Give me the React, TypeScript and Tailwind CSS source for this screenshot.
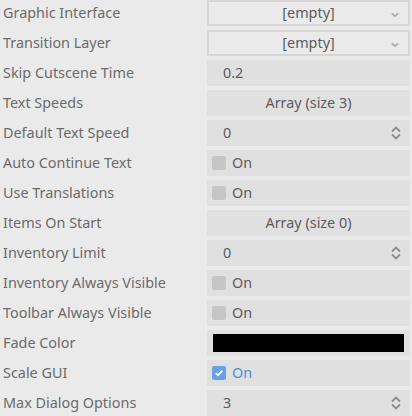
import type { ReactNode } from 'react';

type Field =
  | { kind: 'select'; value: string }
  | { kind: 'text'; value: string }
  | { kind: 'array'; size: number }
  | { kind: 'spin'; value: number }
  | { kind: 'check'; on: boolean }
  | { kind: 'color'; color: string };

const rows: { label: string; field: Field }[] = [
  { label: 'Graphic Interface', field: { kind: 'select', value: '[empty]' } },
  { label: 'Transition Layer', field: { kind: 'select', value: '[empty]' } },
  { label: 'Skip Cutscene Time', field: { kind: 'text', value: '0.2' } },
  { label: 'Text Speeds', field: { kind: 'array', size: 3 } },
  { label: 'Default Text Speed', field: { kind: 'spin', value: 0 } },
  { label: 'Auto Continue Text', field: { kind: 'check', on: false } },
  { label: 'Use Translations', field: { kind: 'check', on: false } },
  { label: 'Items On Start', field: { kind: 'array', size: 0 } },
  { label: 'Inventory Limit', field: { kind: 'spin', value: 0 } },
  { label: 'Inventory Always Visible', field: { kind: 'check', on: false } },
  { label: 'Toolbar Always Visible', field: { kind: 'check', on: false } },
  { label: 'Fade Color', field: { kind: 'color', color: '#000000' } },
  { label: 'Scale GUI', field: { kind: 'check', on: true } },
  { label: 'Max Dialog Options', field: { kind: 'spin', value: 3 } },
];

function Chevron() {
  return (
    <svg width="10" height="6" viewBox="0 0 10 6" className="absolute right-[8px] top-[10px]">
      <path d="M1.8 1.4 5 4.2 8.2 1.4" fill="none" stroke="#ababab" strokeWidth="1.7" />
    </svg>
  );
}

function Stepper() {
  return (
    <svg width="12" height="16" viewBox="0 0 12 16" className="absolute right-[8px] top-[5px]">
      <path d="M2 6.5 6 2.5 10 6.5M2 9.5 6 13.5 10 9.5" fill="none" stroke="#8c8c8c" strokeWidth="1.8" />
    </svg>
  );
}

function Value({ field }: { field: Field }) {
  const base = 'relative h-[26px] w-full text-[14.4px] text-[#5c5c5c] pb-[1px]';
  switch (field.kind) {
    case 'select':
      return (
        <div className={`${base} border-2 border-[#d6d6d6] flex items-center justify-center`}>
          {field.value}
          <Chevron />
        </div>
      );
    case 'text':
      return <div className={`${base} bg-[#e0e0e0] flex items-center pl-[16px]`}>{field.value}</div>;
    case 'array':
      return <div className={`${base} bg-[#e0e0e0] flex items-center justify-center`}>Array (size {field.size})</div>;
    case 'spin':
      return (
        <div className={`${base} bg-[#e0e0e0] flex items-center pl-[16px]`}>
          {field.value}
          <Stepper />
        </div>
      );
    case 'check':
      return (
        <div className={`${base} bg-[#e0e0e0] flex items-center pl-[5px] gap-[6px]`}>
          {field.on ? (
            <span className="w-[14px] h-[14px] rounded-[2px] bg-[#6aa0e8] flex items-center justify-center">
              <svg width="10" height="10" viewBox="0 0 10 10">
                <path d="M1.8 5.2 4 7.3 8.3 2.6" fill="none" stroke="#ffffff" strokeWidth="1.8" />
              </svg>
            </span>
          ) : (
            <span className="w-[14px] h-[14px] rounded-[2px] bg-[#c6c6c6]" />
          )}
          <span className={field.on ? 'text-[#4a8de6]' : ''}>On</span>
        </div>
      );
    case 'color':
      return (
        <div className="relative h-[26px] w-full bg-[#e0e0e0] px-[6px] py-[4px]">
          <div className="w-full h-full" style={{ backgroundColor: field.color }} />
        </div>
      );
  }
}

function Row({ label, children }: { label: string; children: ReactNode }) {
  return (
    <div className="grid grid-cols-[207px_1fr] h-[30px] pr-[2px]">
      <div className="h-[26px] flex items-center pl-[3px] pb-[1px] text-[14.4px] text-[#6b6b6b] whitespace-nowrap">{label}</div>
      {children}
    </div>
  );
}

export default function App() {
  return (
    <div className="w-[412px] h-[416px] overflow-hidden bg-[#eaeaea]" style={{ fontFamily: '"Noto Sans", sans-serif' }}>
      {rows.map((r) => (
        <Row key={r.label} label={r.label}>
          <Value field={r.field} />
        </Row>
      ))}
    </div>
  );
}
